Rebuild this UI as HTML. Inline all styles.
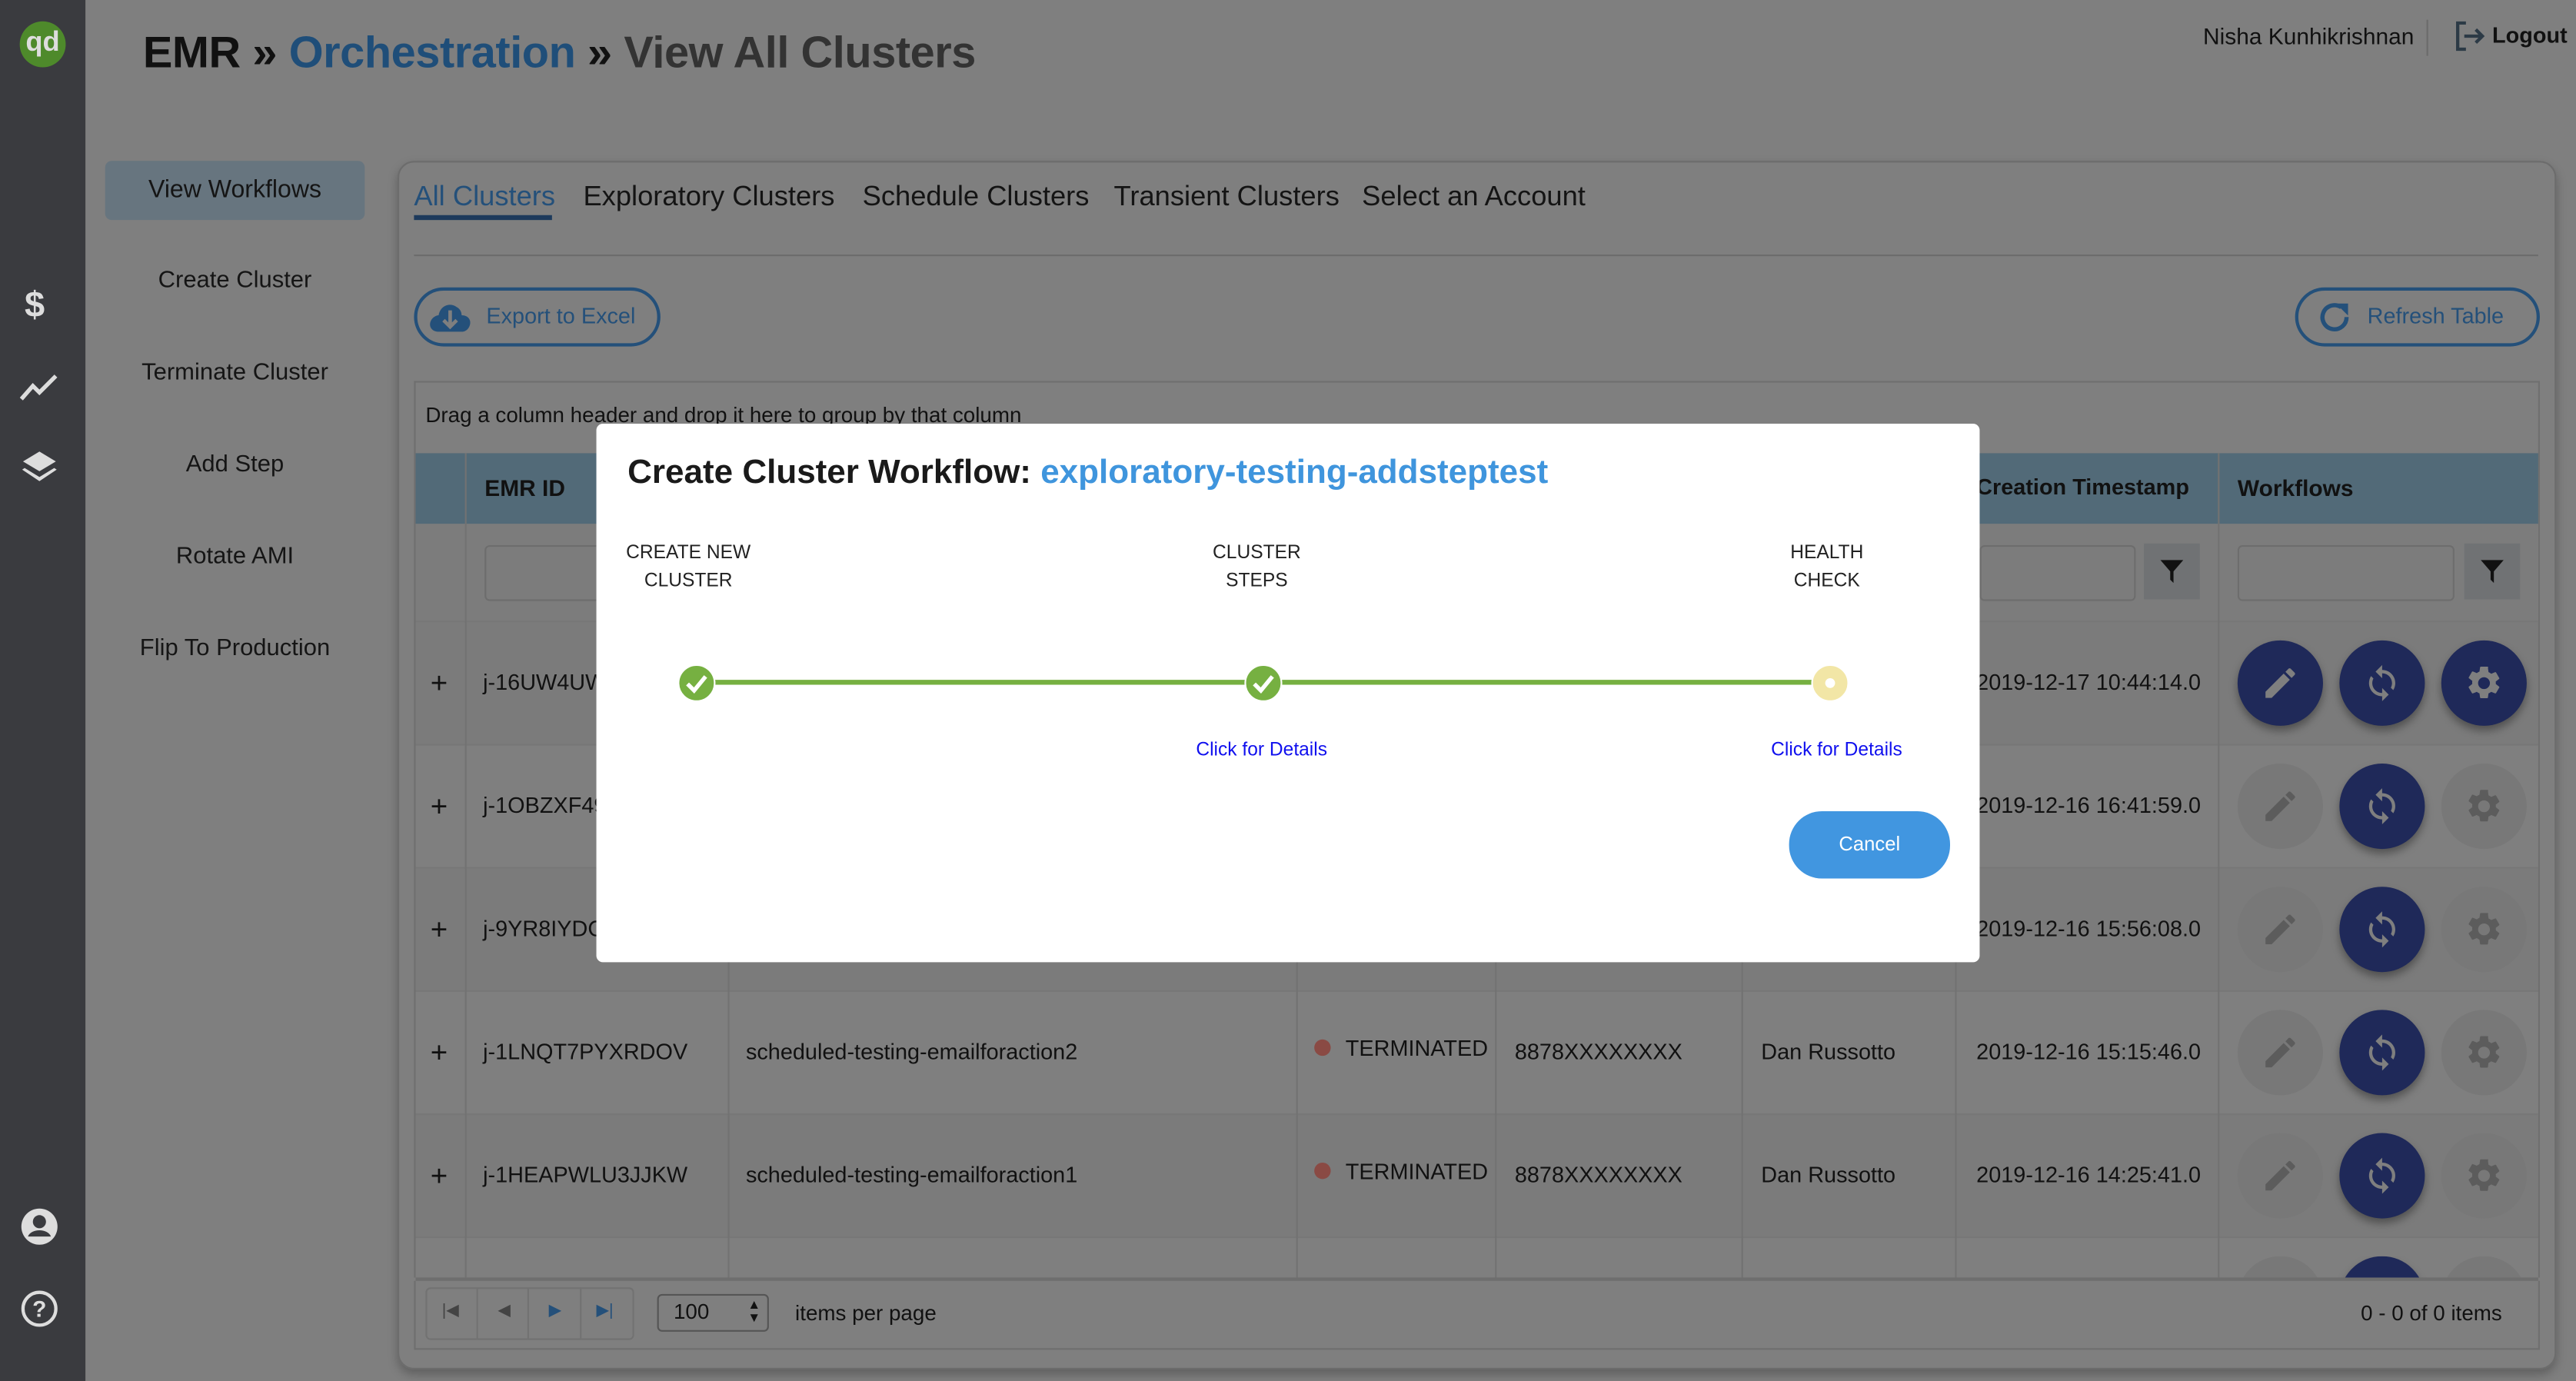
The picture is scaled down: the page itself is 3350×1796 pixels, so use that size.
<!DOCTYPE html>
<html><head><meta charset="utf-8"><style>
*{box-sizing:border-box;margin:0;padding:0}
html,body{width:3350px;height:1796px;overflow:hidden;background:#7f7f7f}
#w{position:absolute;left:0;top:0;width:1568px;height:841px;transform:scale(2.13648,2.13555);transform-origin:0 0;font-family:"Liberation Sans",sans-serif;color:#111;background:#7f7f7f}
.a{position:absolute}
.sb{left:0;top:0;width:52px;height:841px;background:#3a3b3f}
.nav{left:64px;width:158px;text-align:center;font-size:14.5px;color:#151515}
.panel{left:242px;top:98px;width:1314px;height:736px;border:1px solid #6c6c6c;border-radius:10px;box-shadow:0 3px 6px rgba(0,0,0,.25)}
.tab{top:110px;font-size:17px;color:#141414}
.btn{height:36px;border:2px solid #24507a;border-radius:18px;color:#24507a;font-size:14px}
.row{left:253px;width:1292px;height:75px;border-bottom:1px solid #777}
.vl{top:276px;width:1px;height:502px;background:#727272}
.t{font-size:13.5px;color:#111;white-space:nowrap}
.c{width:52px;height:52px;border-radius:50%}
.nv{background:#1f2959;box-shadow:0 3px 5px rgba(0,0,0,.35)}
.gy{background:#787878}
.c svg{position:absolute;left:14px;top:14px;width:24px;height:24px}
</style></head><body><div id="w">
<svg width="0" height="0" style="position:absolute"><defs>
<symbol id="pen" viewBox="0 0 24 24"><path d="M3 17.25V21h3.75L17.81 9.94l-3.75-3.75L3 17.25zM20.71 7.04a1 1 0 000-1.41l-2.34-2.34a1 1 0 00-1.410 0l-1.83 1.83 3.75 3.75 1.83-1.83z"/></symbol>
<symbol id="ref" viewBox="0 0 24 24"><path d="M12 4V1L8 5l4 4V6c3.31 0 6 2.690 6 6 0 1.01-.25 1.970-.7 2.8l1.46 1.46A7.930 7.930 0 0020 12c0-4.42-3.58-8-8-8zm0 14c-3.31 0-6-2.69-6-6 0-1.01.25-1.97.7-2.8L5.24 7.74A7.93 7.93 0 004 12c0 4.42 3.58 8 8 8v3l4-4-4-4v3z"/></symbol>
<symbol id="gear" viewBox="0 0 24 24"><path d="M19.14 12.94c.04-.3.06-.61.06-.94s-.02-.64-.07-.94l2.03-1.58a.49.49 0 00.12-.61l-1.92-3.32a.49.49 0 00-.59-.22l-2.39.96a7 7 0 00-1.62-.94l-.36-2.54A.48.48 0 0013.92 2h-3.84a.48.48 0 00-.47.41l-.36 2.54c-.59.24-1.13.57-1.62.94l-2.39-.96a.48.48 0 00-.59.22L2.74 8.47a.47.47 0 00.12.61l2.03 1.58c-.05.3-.09.63-.09.94s.02.64.07.94l-2.03 1.58a.49.49 0 00-.12.61l1.92 3.32c.12.22.37.29.59.22l2.39-.96c.5.38 1.03.7 1.62.94l.36 2.54c.05.24.24.41.48.41h3.84c.24 0 .44-.17.47-.41l.36-2.54c.59-.24 1.13-.56 1.62-.94l2.39.96c.22.08.47 0 .59-.22l1.92-3.32a.47.47 0 00-.12-.61l-2.01-1.58zM12 15.6A3.6 3.6 0 1112 8.4a3.6 3.6 0 010 7.2z"/></symbol>
</defs></svg>

<div class="a sb"></div>
<div class="a" style="left:12px;top:13px;width:28px;height:28px;border-radius:50%;background:#4e8a2b;color:#ddd;font-size:17px;font-weight:bold;text-align:center;line-height:26px">qd</div>
<div class="a" style="left:15px;top:173px;font-size:22px;color:#ddd;font-weight:bold">$</div>
<svg class="a" style="left:12px;top:227px" width="24" height="18" viewBox="0 0 24 18"><path d="M1 16 L8 8 L12 12 L22 2" stroke="#ddd" stroke-width="2.5" fill="none"/></svg>
<svg class="a" style="left:12px;top:273px" width="24" height="24" viewBox="0 0 24 24"><path d="M12 2 L22 8 L12 14 L2 8Z" fill="#ddd"/><path d="M3 12 L12 17.5 L21 12 L22.5 13 L12 20 L1.5 13Z" fill="#ddd"/></svg>
<svg class="a" style="left:12px;top:735px" width="24" height="24" viewBox="0 0 24 24"><circle cx="12" cy="12" r="11" fill="#ddd"/><circle cx="12" cy="9" r="4" fill="#3a3b3f"/><path d="M5 18 C7 13 17 13 19 18" fill="#3a3b3f"/></svg>
<svg class="a" style="left:12px;top:785px" width="24" height="24" viewBox="0 0 24 24"><circle cx="12" cy="12" r="10" fill="none" stroke="#ddd" stroke-width="2"/><text x="12" y="17" text-anchor="middle" font-size="14" font-weight="bold" fill="#ddd" font-family="Liberation Sans">?</text></svg>

<div class="a" style="left:87px;top:17px;font-size:27px;font-weight:bold;white-space:nowrap;letter-spacing:-.2px"><span style="color:#111">EMR</span> <span style="color:#111">»</span> <span style="color:#1f4e79">Orchestration</span> <span style="color:#111">»</span> <span style="color:#333">View All Clusters</span></div>
<div class="a" style="left:1341px;top:14px;font-size:14px;color:#111">Nisha Kunhikrishnan</div>
<div class="a" style="left:1477px;top:12px;width:1px;height:22px;background:#6b6b6b"></div>
<svg class="a" style="left:1494px;top:13px" width="20" height="18" viewBox="0 0 20 18"><path d="M7 1H2V17H7" stroke="#2c3a46" stroke-width="2" fill="none"/><path d="M6 9H17M13 5L17 9L13 13" stroke="#2c3a46" stroke-width="2" fill="none"/></svg>
<div class="a" style="left:1517px;top:14px;font-size:13.5px;font-weight:bold;color:#111">Logout</div>

<div class="a" style="left:64px;top:98px;width:158px;height:36px;background:#67757f;border-radius:4px"></div>
<div class="a nav" style="top:107px;font-size:15px">View Workflows</div>
<div class="a nav" style="top:163px">Create Cluster</div>
<div class="a nav" style="top:219px">Terminate Cluster</div>
<div class="a nav" style="top:275px">Add Step</div>
<div class="a nav" style="top:331px">Rotate AMI</div>
<div class="a nav" style="top:387px">Flip To Production</div>

<div class="a panel"></div>
<div class="a tab" style="left:252px;color:#24507a">All Clusters</div>
<div class="a" style="left:252px;top:131px;width:84px;height:3px;background:#1d3a5c"></div>
<div class="a tab" style="left:355px">Exploratory Clusters</div>
<div class="a tab" style="left:525px">Schedule Clusters</div>
<div class="a tab" style="left:678px">Transient Clusters</div>
<div class="a tab" style="left:829px">Select an Account</div>
<div class="a" style="left:252px;top:155px;width:1293px;height:1px;background:#6c6c6c"></div>

<div class="a btn" style="left:252px;top:175px;width:150px"><svg class="a" style="left:7px;top:6px" width="26" height="20" viewBox="0 0 26 20"><path d="M6 19C2 19 0 16 1 13C2 10 5 9 6 9C7 3 13 1 17 4C19 5 20 7 20 9C24 9 26 12 25 15C24 18 22 19 20 19Z" fill="#24507a"/><path d="M13 6V15M9 12L13 16L17 12" stroke="#7f7f7f" stroke-width="2.2" fill="none"/></svg><span class="a" style="left:42px;top:8px;white-space:nowrap;font-size:13.5px">Export to Excel</span></div>
<div class="a btn" style="left:1397px;top:175px;width:149px"><svg class="a" style="left:11px;top:6px" width="22" height="22" viewBox="0 0 24 24"><path d="M20 11A8 8 0 1 1 16.5 4.5" stroke="#24507a" stroke-width="2.8" fill="none"/><path d="M13 2H21V10Z" fill="#24507a"/></svg><span class="a" style="left:42px;top:8px;white-space:nowrap;font-size:13.5px">Refresh Table</span></div>

<div class="a" style="left:252px;top:232px;width:1294px;height:546px;border:1px solid #6f6f6f;border-bottom:none"></div>
<div class="a" style="left:259px;top:245px;font-size:13px;color:#111">Drag a column header and drop it here to group by that column</div>
<div class="a" style="left:253px;top:276px;width:1292px;height:43px;background:#526a78"></div>
<div class="a" style="left:295px;top:289px;font-size:14px;font-weight:bold;color:#111">EMR ID</div>
<div class="a" style="left:1203px;top:289px;font-size:13.5px;font-weight:bold;color:#111">Creation Timestamp</div>
<div class="a" style="left:1362px;top:289px;font-size:14px;font-weight:bold;color:#111">Workflows</div>
<div class="a" style="left:253px;top:319px;width:1292px;height:60px;background:#7c7c7c;border-bottom:1px solid #777"></div>
<div class="a" style="left:295px;top:332px;width:80px;height:34px;border:1px solid #6d6d6d;border-radius:3px"></div>
<div class="a" style="left:1205px;top:332px;width:95px;height:34px;border:1px solid #6d6d6d;border-radius:3px"></div>
<div class="a" style="left:1305px;top:331px;width:34px;height:34px;background:#707274"></div>
<div class="a" style="left:1362px;top:332px;width:132px;height:34px;border:1px solid #6d6d6d;border-radius:3px"></div>
<div class="a" style="left:1500px;top:331px;width:34px;height:34px;background:#707274"></div>
<svg class="a" style="left:1315px;top:341px" width="14" height="14" viewBox="0 0 14 14"><path d="M0 0H14L8 7V14L6 12V7Z" fill="#111"/></svg>
<svg class="a" style="left:1510px;top:341px" width="14" height="14" viewBox="0 0 14 14"><path d="M0 0H14L8 7V14L6 12V7Z" fill="#111"/></svg>

<div class="a row" style="top:379px;background:#7b7b7b"></div>
<div class="a row" style="top:454px;background:#7f7f7f"></div>
<div class="a row" style="top:529px;background:#7b7b7b"></div>
<div class="a row" style="top:604px;background:#7f7f7f"></div>
<div class="a row" style="top:679px;background:#7b7b7b"></div>
<div class="a" style="left:253px;top:754px;width:1292px;height:24px;background:#7f7f7f"></div>
<div class="a vl" style="left:283px"></div><div class="a vl" style="left:443px"></div><div class="a vl" style="left:789px"></div><div class="a vl" style="left:910px"></div><div class="a vl" style="left:1060px"></div><div class="a vl" style="left:1190px"></div><div class="a vl" style="left:1350px"></div>

<div class="a t" style="left:262px;top:406px;font-size:18px">+</div><div class="a t" style="left:294px;top:408px">j-16UW4UW</div><div class="a t" style="left:1203px;top:408px">2019-12-17 10:44:14.0</div>
<div class="a t" style="left:262px;top:481px;font-size:18px">+</div><div class="a t" style="left:294px;top:483px">j-1OBZXF49</div><div class="a t" style="left:1203px;top:483px">2019-12-16 16:41:59.0</div>
<div class="a t" style="left:262px;top:556px;font-size:18px">+</div><div class="a t" style="left:294px;top:558px">j-9YR8IYDC</div><div class="a t" style="left:1203px;top:558px">2019-12-16 15:56:08.0</div>
<div class="a t" style="left:262px;top:631px;font-size:18px">+</div><div class="a t" style="left:294px;top:633px">j-1LNQT7PYXRDOV</div><div class="a t" style="left:454px;top:633px">scheduled-testing-emailforaction2</div>
<div class="a" style="left:800px;top:633px;width:10px;height:10px;border-radius:50%;background:#8a4a44"></div><div class="a t" style="left:819px;top:631px">TERMINATED</div><div class="a t" style="left:922px;top:633px">8878XXXXXXXX</div><div class="a t" style="left:1072px;top:633px">Dan Russotto</div><div class="a t" style="left:1203px;top:633px">2019-12-16 15:15:46.0</div>
<div class="a t" style="left:262px;top:706px;font-size:18px">+</div><div class="a t" style="left:294px;top:708px">j-1HEAPWLU3JJKW</div><div class="a t" style="left:454px;top:708px">scheduled-testing-emailforaction1</div>
<div class="a" style="left:800px;top:708px;width:10px;height:10px;border-radius:50%;background:#8a4a44"></div><div class="a t" style="left:819px;top:706px">TERMINATED</div><div class="a t" style="left:922px;top:708px">8878XXXXXXXX</div><div class="a t" style="left:1072px;top:708px">Dan Russotto</div><div class="a t" style="left:1203px;top:708px">2019-12-16 14:25:41.0</div>

<div class="a c nv" style="left:1362px;top:390px"><svg fill="#7f7f7f"><use href="#pen"/></svg></div>
<div class="a c nv" style="left:1424px;top:390px"><svg fill="#7f7f7f"><use href="#ref"/></svg></div>
<div class="a c nv" style="left:1486px;top:390px"><svg fill="#7f7f7f"><use href="#gear"/></svg></div>
<div class="a c gy" style="left:1362px;top:465px"><svg fill="#5c5c5c"><use href="#pen"/></svg></div>
<div class="a c nv" style="left:1424px;top:465px"><svg fill="#7f7f7f"><use href="#ref"/></svg></div>
<div class="a c gy" style="left:1486px;top:465px"><svg fill="#5c5c5c"><use href="#gear"/></svg></div>
<div class="a c gy" style="left:1362px;top:540px"><svg fill="#5c5c5c"><use href="#pen"/></svg></div>
<div class="a c nv" style="left:1424px;top:540px"><svg fill="#7f7f7f"><use href="#ref"/></svg></div>
<div class="a c gy" style="left:1486px;top:540px"><svg fill="#5c5c5c"><use href="#gear"/></svg></div>
<div class="a c gy" style="left:1362px;top:615px"><svg fill="#5c5c5c"><use href="#pen"/></svg></div>
<div class="a c nv" style="left:1424px;top:615px"><svg fill="#7f7f7f"><use href="#ref"/></svg></div>
<div class="a c gy" style="left:1486px;top:615px"><svg fill="#5c5c5c"><use href="#gear"/></svg></div>
<div class="a c gy" style="left:1362px;top:690px"><svg fill="#5c5c5c"><use href="#pen"/></svg></div>
<div class="a c nv" style="left:1424px;top:690px"><svg fill="#7f7f7f"><use href="#ref"/></svg></div>
<div class="a c gy" style="left:1486px;top:690px"><svg fill="#5c5c5c"><use href="#gear"/></svg></div>
<div class="a" style="left:1362px;top:765px;width:184px;height:13px;overflow:hidden"><div class="a c gy" style="left:0;top:0"></div><div class="a c nv" style="left:62px;top:0"></div><div class="a c gy" style="left:124px;top:0"></div></div>

<div class="a" style="left:253px;top:778px;width:1292px;height:2px;background:#6e6e6e"></div>
<div class="a" style="left:252px;top:780px;width:1294px;height:42px;border:1px solid #6f6f6f;border-top:none"></div>
<div class="a" style="left:259px;top:784px;width:127px;height:32px;border:1px solid #727272;border-radius:3px"></div>
<div class="a" style="left:290px;top:784px;width:1px;height:32px;background:#727272"></div><div class="a" style="left:321px;top:784px;width:1px;height:32px;background:#727272"></div><div class="a" style="left:353px;top:784px;width:1px;height:32px;background:#727272"></div>
<div class="a" style="left:269px;top:793px;font-size:10px;color:#444">|◀</div><div class="a" style="left:303px;top:793px;font-size:10px;color:#444">◀</div><div class="a" style="left:334px;top:793px;font-size:10px;color:#24507a">▶</div><div class="a" style="left:363px;top:793px;font-size:10px;color:#24507a">▶|</div>
<div class="a" style="left:400px;top:788px;width:68px;height:23px;border:1px solid #555;border-radius:3px;font-size:13px;padding:2px 0 0 9px">100<span style="position:absolute;right:4px;top:2px;font-size:8px;line-height:8px">▲<br>▼</span></div>
<div class="a t" style="left:484px;top:792px;font-size:13px">items per page</div>
<div class="a t" style="left:1437px;top:792px;font-size:13px">0 - 0 of 0 items</div>

<div class="a" style="left:363px;top:258px;width:842px;height:328px;background:#fff;border-radius:4px"></div>
<div class="a" style="left:382px;top:276px;font-size:20.6px;font-weight:bold;color:#1a1a1a;white-space:nowrap">Create Cluster Workflow: <span style="color:#3f95dd">exploratory-testing-addsteptest</span></div>
<div class="a" style="left:374px;top:329px;width:90px;text-align:center;font-size:11.5px;line-height:17px;color:#222">CREATE NEW<br>CLUSTER</div>
<div class="a" style="left:720px;top:329px;width:90px;text-align:center;font-size:11.5px;line-height:17px;color:#222">CLUSTER<br>STEPS</div>
<div class="a" style="left:1067px;top:329px;width:90px;text-align:center;font-size:11.5px;line-height:17px;color:#222">HEALTH<br>CHECK</div>
<div class="a" style="left:424px;top:414px;width:690px;height:3px;background:#76b041"></div>
<svg class="a" style="left:412px;top:404px" width="24" height="24" viewBox="0 0 24 24"><circle cx="12" cy="12" r="11" fill="#76b041" stroke="#fff" stroke-width="1"/><path d="M6.5 12.5L10.5 16.5L17.5 8" stroke="#fff" stroke-width="2.5" fill="none"/></svg>
<svg class="a" style="left:757px;top:404px" width="24" height="24" viewBox="0 0 24 24"><circle cx="12" cy="12" r="11" fill="#76b041" stroke="#fff" stroke-width="1"/><path d="M6.5 12.5L10.5 16.5L17.5 8" stroke="#fff" stroke-width="2.5" fill="none"/></svg>
<svg class="a" style="left:1102px;top:404px" width="24" height="24" viewBox="0 0 24 24"><circle cx="12" cy="12" r="11" fill="#f2e6a6" stroke="#fff" stroke-width="1"/><circle cx="12" cy="12" r="3" fill="#fff"/></svg>
<div class="a" style="left:728px;top:451px;font-size:11.5px;color:#1010ee">Click for Details</div>
<div class="a" style="left:1078px;top:451px;font-size:11.5px;color:#1010ee">Click for Details</div>
<div class="a" style="left:1089px;top:494px;width:98px;height:41px;border-radius:20px;background:#4196e0;color:#fff;font-size:12px;text-align:center;line-height:41px">Cancel</div>
</div></body></html>
